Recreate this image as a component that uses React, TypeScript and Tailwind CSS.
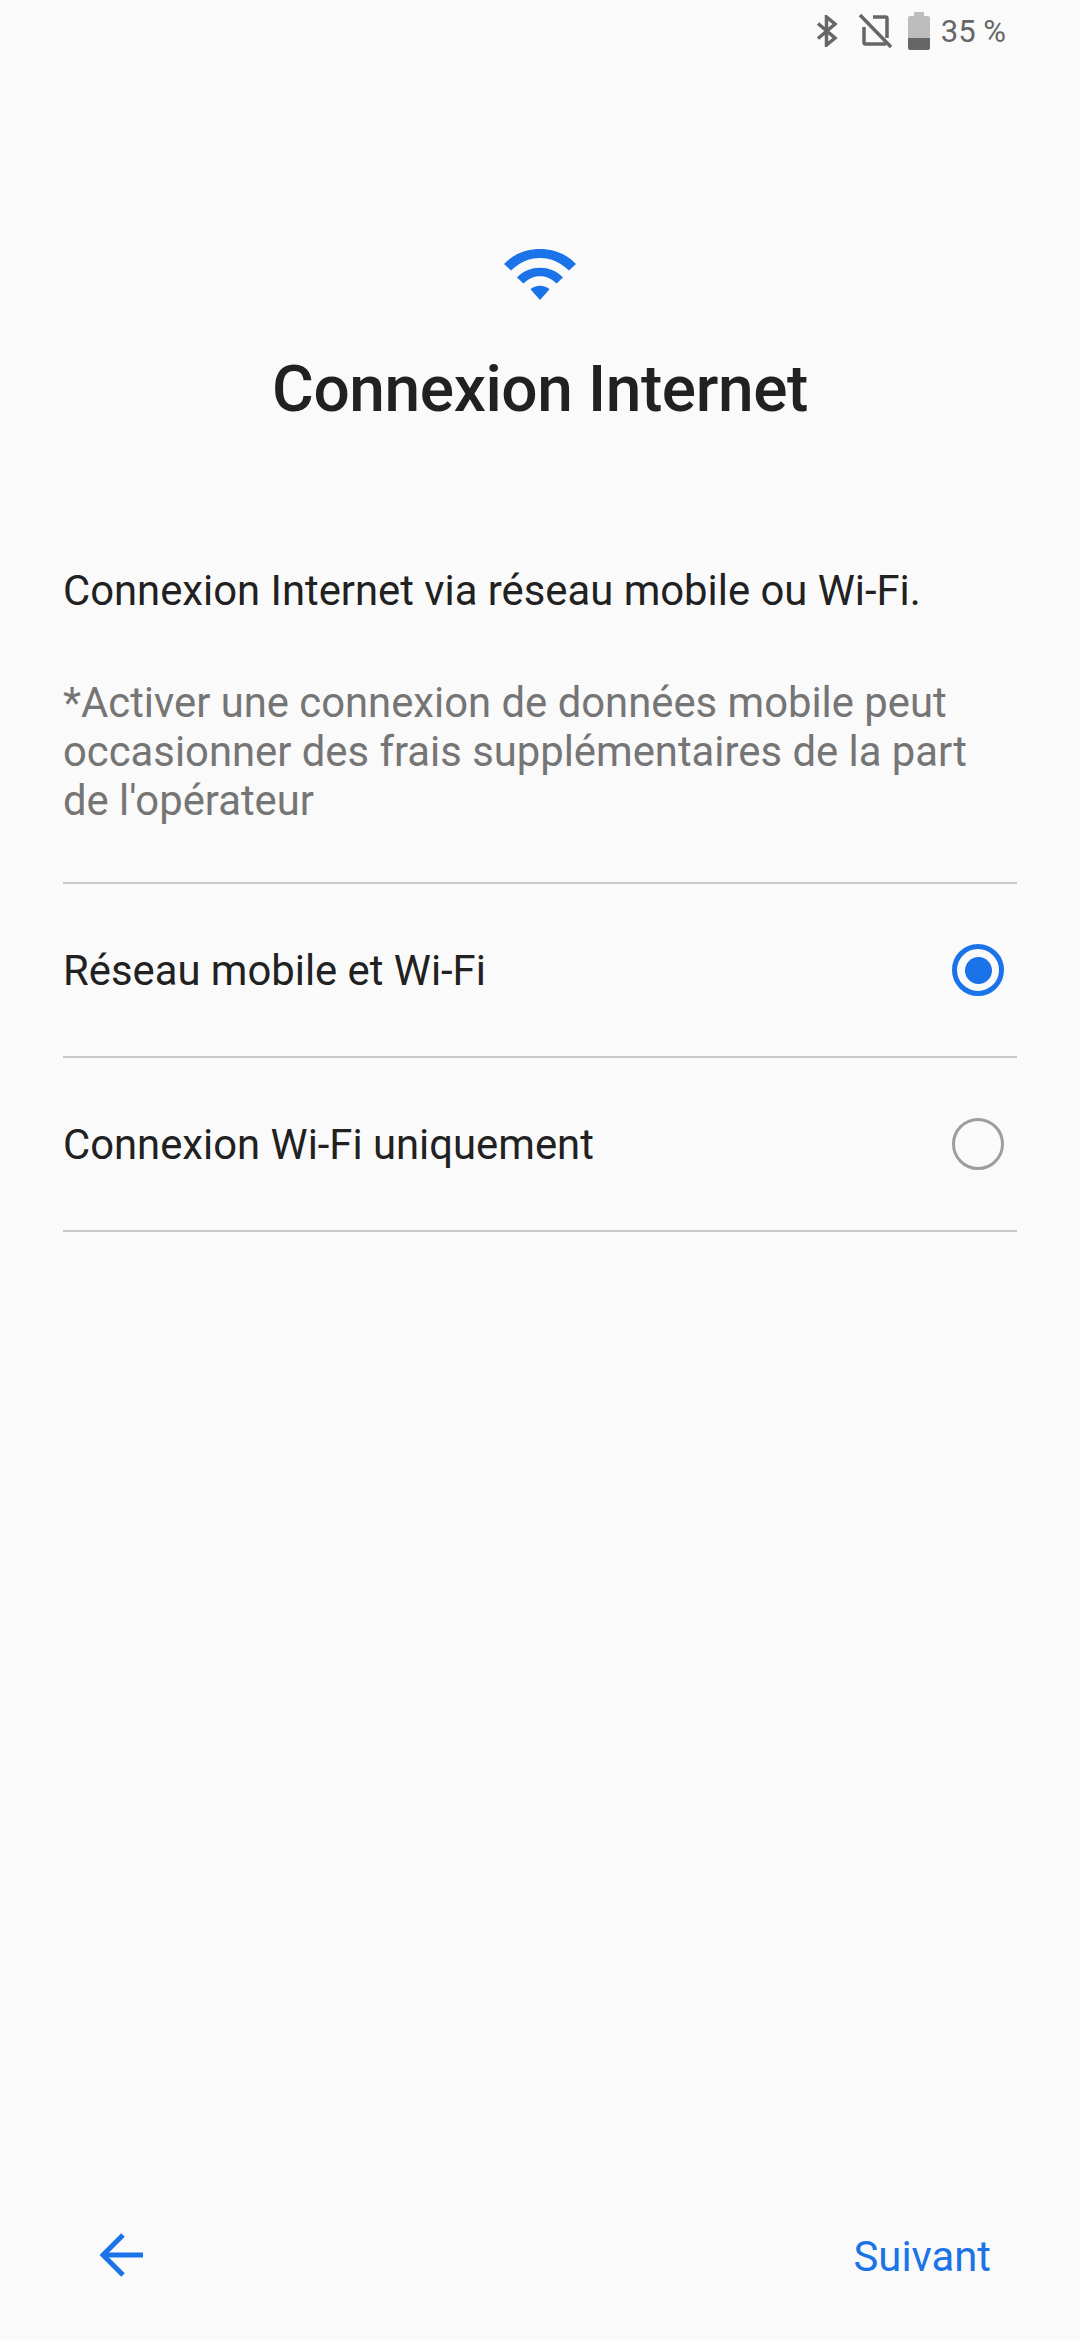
function WifiIcon() {
  return (
    <svg width="72" height="51" viewBox="0 0 72 51" fill="#1a73e8">
      <path d="M0 15C9.500 5 22 0 36 0s26.500 5 36 15L65 21.500C56.500 13.500 47 9 36 9S15.500 13.500 7 21.500Z" />
      <path d="M13 28.500C19 22 27 18.700 36 18.700s17 3.300 23 9.800l-6.500 6C48 29.800 42.500 27.200 36 27.200s-12 2.600-16.500 7.300Z" />
      <path d="M26.500 40.300C29 38 32.500 36.700 36 36.700s7 1.300 9.500 3.600L36 51Z" />
    </svg>
  );
}

function StatusBar() {
  return (
    <div className="flex h-[62px] items-center justify-end pr-[74px] text-[#666666]">
      <svg width="22" height="32" viewBox="0 0 22 32" fill="none" stroke="currentColor" strokeWidth="3.500" className="mr-[21px]">
        <path d="M2 8.500 19 23 10.500 30V2L19 9 2 23.500" />
      </svg>
      <svg width="34" height="34" viewBox="0 0 34 34" fill="none" stroke="currentColor" strokeWidth="3.500" className="mr-[15px]">
        <path d="M5 13v15.500c0 1 .700 1.500 1.500 1.500H27" />
        <path d="M14 3h12.500c1 0 1.500.700 1.500 1.500V24" />
        <path d="M1 1l31 32" />
      </svg>
      <div className="mr-[11px] flex h-[38px] w-[22px] flex-col items-center">
        <div className="h-[4px] w-[10px] rounded-t-[1px] bg-[#bdbdbd]" />
        <div className="h-[22px] w-full rounded-t-[2px] bg-[#bdbdbd]" />
        <div className="h-[12px] w-full rounded-b-[2px] bg-[#666666]" />
      </div>
      <span className="text-[31px] leading-none">35 %</span>
    </div>
  );
}

function Option({ label, checked }: { label: string; checked?: boolean }) {
  return (
    <div className="flex h-[174px] items-center justify-between border-b-2 border-[#c8c8c8] pr-[13px]">
      <span className="pt-[3px] text-[41.800px] text-[#212121]">{label}</span>
      {checked ? (
        <div className="flex size-[52px] items-center justify-center rounded-full border-[5px] border-[#1a73e8]">
          <div className="size-[27px] rounded-full bg-[#1a73e8]" />
        </div>
      ) : (
        <div className="size-[52px] rounded-full border-[3px] border-[#9e9e9e]" />
      )}
    </div>
  );
}

export default function App() {
  return (
    <div className="flex h-[2340px] flex-col bg-[#fafafa] font-['Roboto',sans-serif]">
      <StatusBar />

      <div className="flex flex-col items-center pt-[187px]">
        <WifiIcon />
        <h1 className="mt-[50px] text-[64px] leading-[80px] font-medium tracking-[-0.400px] text-[#212121]">Connexion Internet</h1>
      </div>

      <main className="grow px-[63px] pt-[136px]">
        <p className="text-[41.800px] leading-[50px] text-[#212121]">Connexion Internet via réseau mobile ou Wi-Fi.</p>
        <p className="mt-[62px] text-[41.800px] leading-[49px] text-[#757575]">
          *Activer une connexion de données mobile peut occasionner des frais supplémentaires de la part de l'opérateur
        </p>
        <div className="mt-[57px] border-t-2 border-[#c8c8c8]">
          <Option label="Réseau mobile et Wi-Fi" checked />
          <Option label="Connexion Wi-Fi uniquement" />
        </div>
      </main>

      <footer className="flex h-[170px] items-center justify-between pr-[89px] pl-[100px]">
        <svg width="44" height="44" viewBox="0 0 44 44" fill="none" stroke="#1a73e8" strokeWidth="5">
          <path d="M43 22H4" />
          <path d="M23 2 3 22l20 20" />
        </svg>
        <span className="pt-[4px] text-[41.800px] leading-[48px] text-[#1a73e8]">Suivant</span>
      </footer>
    </div>
  );
}
